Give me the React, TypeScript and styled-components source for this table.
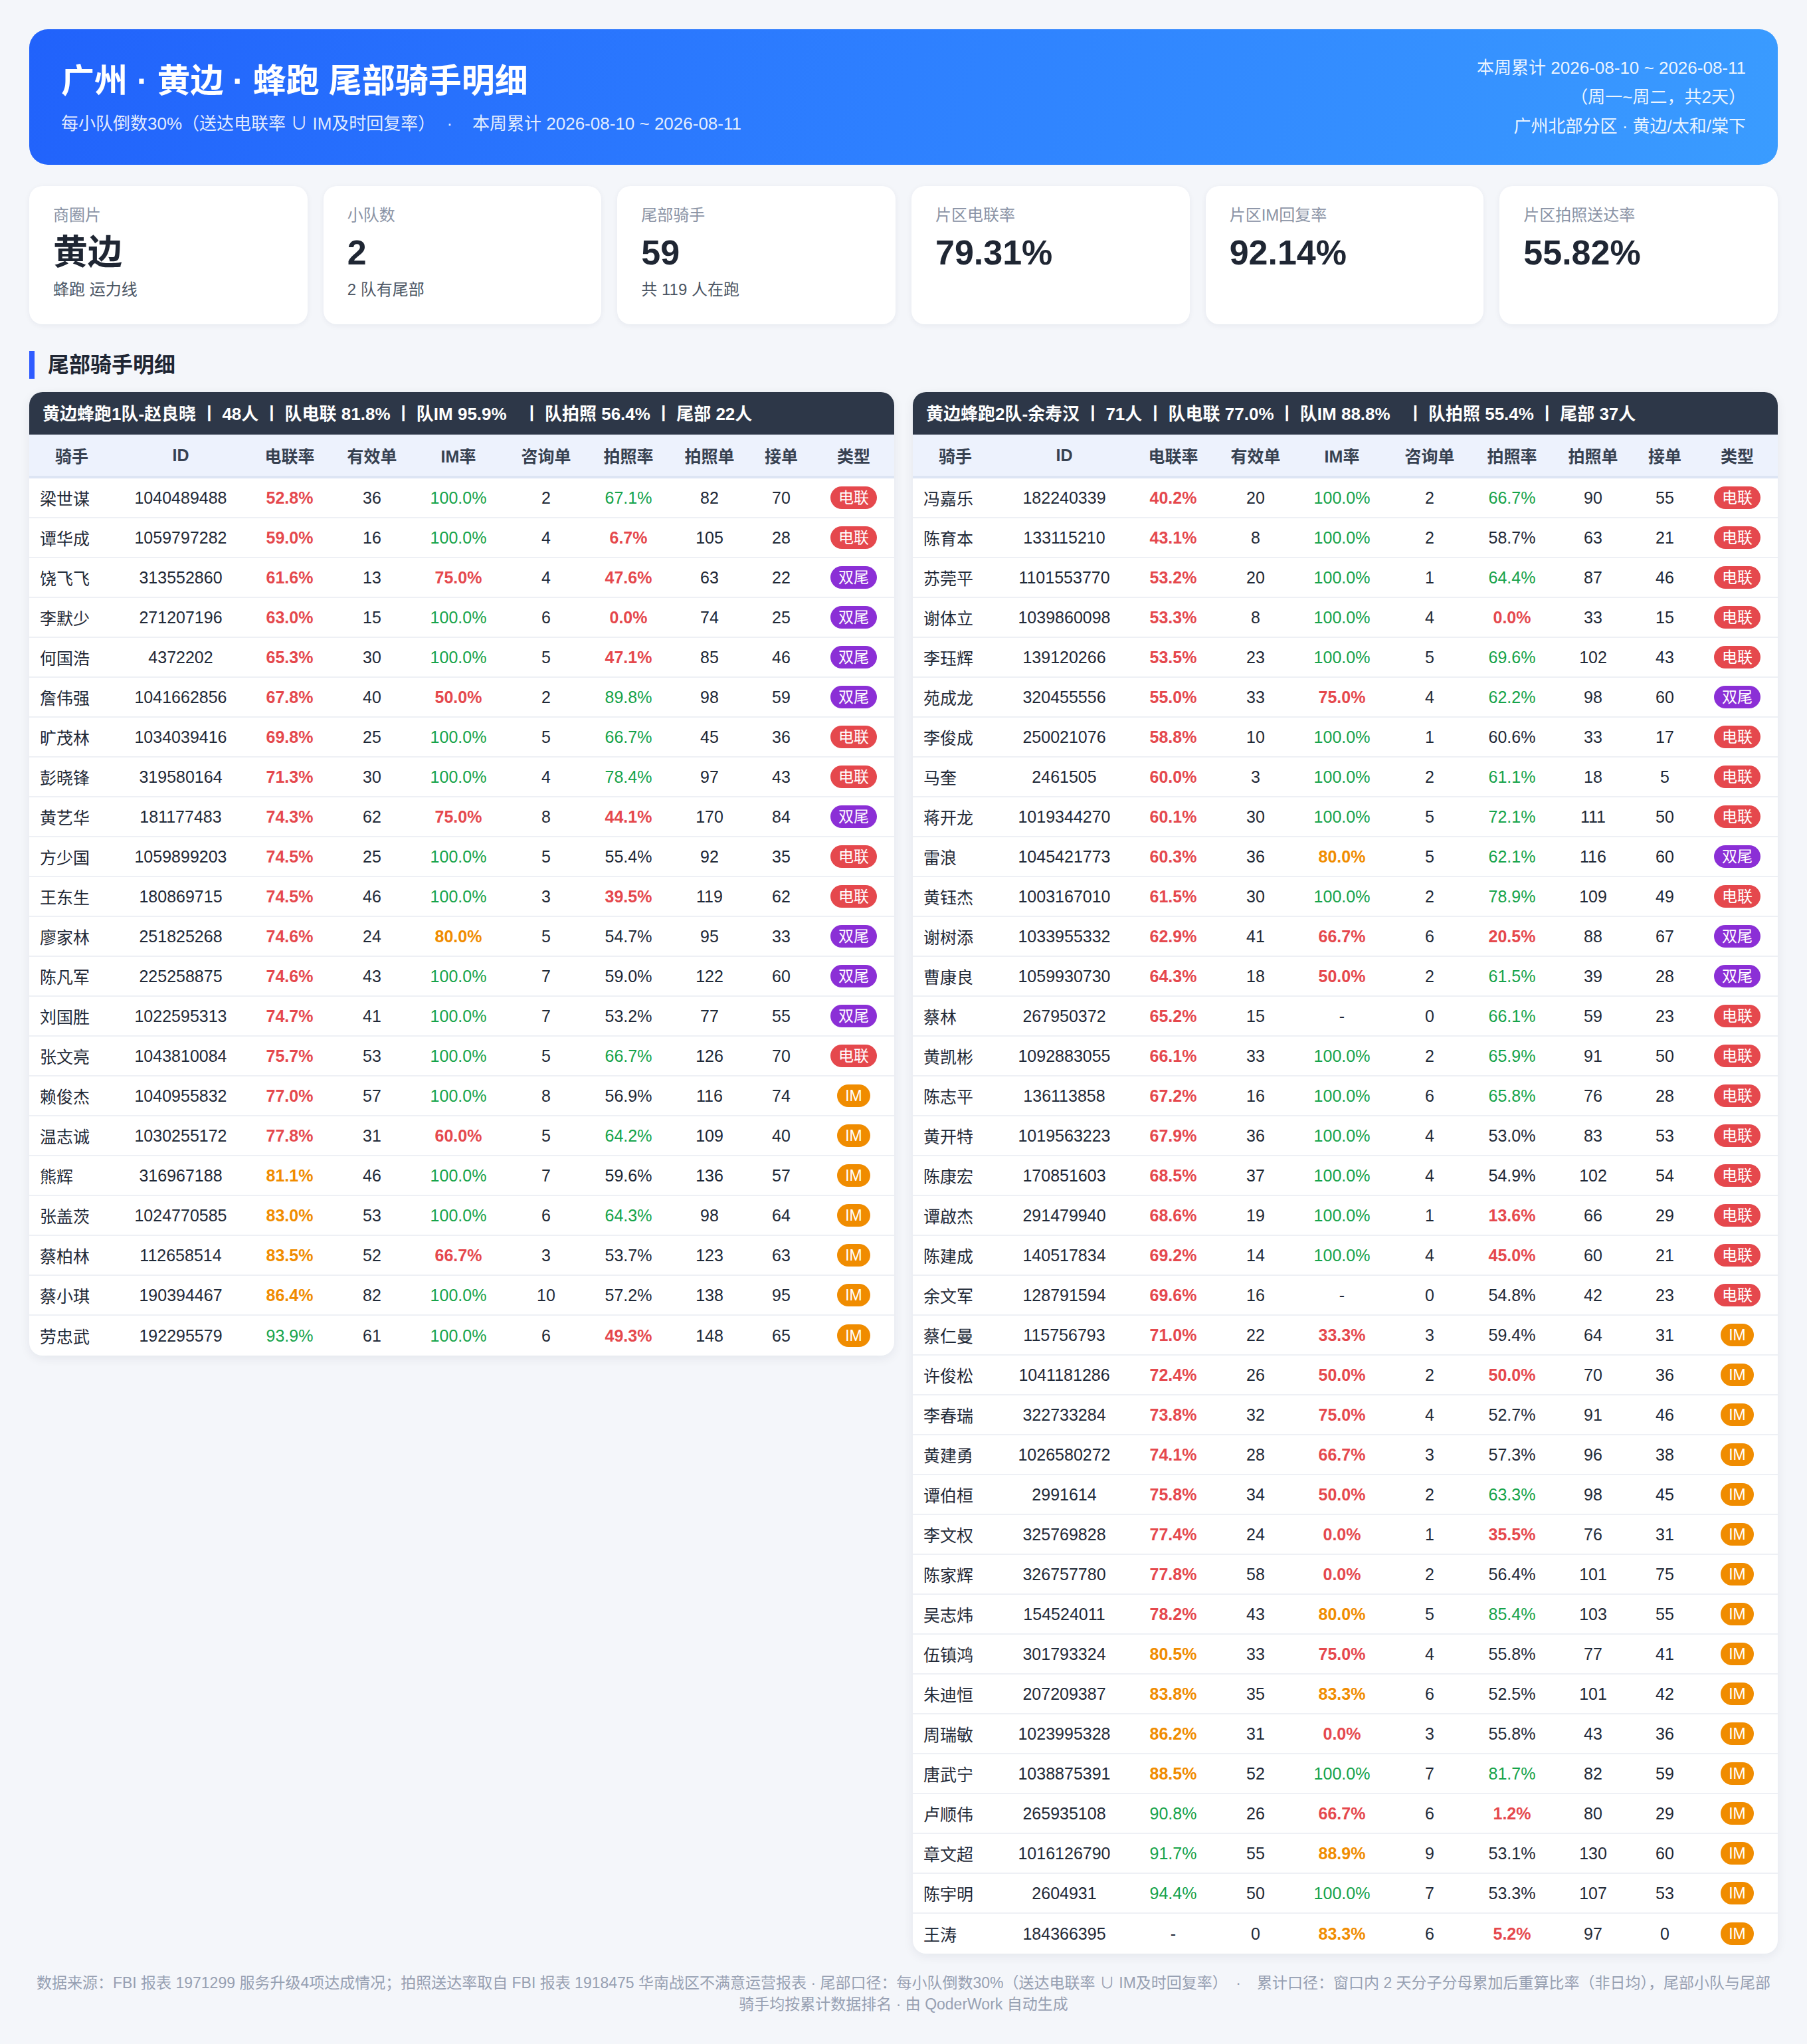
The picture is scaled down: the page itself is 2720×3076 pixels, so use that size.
import React from "react";
import styled, { createGlobalStyle } from "styled-components";

type Kind = "el" | "dual" | "im";
type Row = [string, string, number | null, number, number | null, number, number, number, number, Kind];

const GlobalStyle = createGlobalStyle`
  html, body {
    margin: 0;
    padding: 0;
    background: #f4f6fa;
  }
  body {
    font-family: "Liberation Sans", "Noto Sans CJK SC", sans-serif;
    color: #1f2937;
  }
  * {
    box-sizing: border-box;
  }
`;

const COLORS = {
  red: "#e5484d",
  orange: "#f08c00",
  green: "#16a34a",
  text: "#1f2937",
};

const Page = styled.div`
  zoom: 2;
  width: 1360px;
  padding: 22px 22px 20px;
`;

const Hero = styled.header`
  display: flex;
  justify-content: space-between;
  align-items: center;
  height: 102px;
  padding: 0 24px;
  border-radius: 14px;
  background: linear-gradient(110deg, #2162fb 0%, #2e80ff 50%, #3a9cff 100%);
  color: #ffffff;
`;

const HeroLeft = styled.div`
  display: flex;
  flex-direction: column;
  gap: 6px;
`;

const HeroTitle = styled.h1`
  margin: 0;
  font-size: 25px;
  line-height: 34px;
  font-weight: 700;
`;

const HeroSub = styled.div`
  font-size: 13px;
  line-height: 18px;
  color: rgba(255, 255, 255, 0.88);
`;

const Dot = styled.span<{ $gap: number }>`
  margin: 0 ${(p) => p.$gap}px;
`;

const HeroRight = styled.div`
  text-align: right;
  font-size: 13px;
  line-height: 22px;
  color: rgba(255, 255, 255, 0.92);
`;

const KpiGrid = styled.section`
  display: grid;
  grid-template-columns: repeat(6, 1fr);
  gap: 12px;
  margin-top: 16px;
`;

const KpiCard = styled.div`
  height: 104px;
  padding: 14px 18px;
  background: #ffffff;
  border-radius: 10px;
  box-shadow: 0 1px 4px rgba(20, 30, 60, 0.06);
`;

const KpiLabel = styled.div`
  font-size: 12px;
  line-height: 16px;
  color: #8a93a5;
`;

const KpiValue = styled.div`
  margin-top: 4px;
  font-size: 26px;
  line-height: 32px;
  font-weight: 700;
  color: #1f2633;
`;

const KpiSub = styled.div`
  margin-top: 4px;
  font-size: 12px;
  line-height: 16px;
  color: #4b5563;
`;

const SectionTitle = styled.h2`
  margin: 20px 0 10px;
  padding-left: 10px;
  border-left: 4px solid #2f5bff;
  font-size: 16px;
  line-height: 21px;
  font-weight: 700;
  color: #1f2633;
`;

const Tables = styled.div`
  display: grid;
  grid-template-columns: 1fr 1fr;
  gap: 14px;
  align-items: start;
`;

const TableCard = styled.div`
  background: #ffffff;
  border-radius: 10px;
  overflow: hidden;
  box-shadow: 0 2px 8px rgba(20, 30, 60, 0.07);
`;

const TeamBar = styled.div`
  display: flex;
  align-items: center;
  height: 32px;
  padding: 0 10px 2px;
  background: #2d3748;
  color: #ffffff;
  font-size: 13px;
  font-weight: 700;
  white-space: pre;
`;

const Sep = styled.span<{ $wide?: boolean }>`
  margin: 0 8px 0 ${(p) => (p.$wide ? 17 : 8)}px;
`;

const Table = styled.table`
  width: 100%;
  table-layout: fixed;
  border-collapse: separate;
  border-spacing: 0;
`;

const Th = styled.th`
  height: 33px;
  padding: 0;
  background: #edf2fd;
  border-bottom: 2px solid #dde5f4;
  font-size: 12.5px;
  font-weight: 700;
  color: #374151;
  text-align: center;
`;

const Td = styled.td<{ $left?: boolean; $tone?: keyof typeof COLORS; $bold?: boolean }>`
  height: 30px;
  padding: ${(p) => (p.$left ? "0 0 0 8px" : "0")};
  border-bottom: 1px solid #eef0f5;
  font-size: 12.5px;
  text-align: ${(p) => (p.$left ? "left" : "center")};
  color: ${(p) => COLORS[p.$tone ?? "text"]};
  font-weight: ${(p) => (p.$bold ? 700 : 400)};
  white-space: nowrap;

  tr:last-child > & {
    border-bottom: none;
  }
`;

const Badge = styled.span<{ $kind: Kind }>`
  display: inline-block;
  height: 17px;
  padding: 0 6px;
  border-radius: 9px;
  font-size: 11.5px;
  line-height: 17px;
  color: #ffffff;
  background: ${(p) => (p.$kind === "el" ? COLORS.red : p.$kind === "dual" ? "#8b2fd6" : COLORS.orange)};
`;

const Footer = styled.footer`
  margin-top: 14px;
  font-size: 11.5px;
  line-height: 16px;
  color: #97a0b2;
  text-align: center;
`;

const COLS = [64, 100, 64, 60, 70, 62, 62, 60, 48, 61];
const HEADS = ["骑手", "ID", "电联率", "有效单", "IM率", "咨询单", "拍照率", "拍照单", "接单", "类型"];
const KIND_LABEL: Record<Kind, string> = { el: "电联", dual: "双尾", im: "IM" };

const team1: Row[] = [
  ["梁世谋", "1040489488", 52.8, 36, 100, 2, 67.1, 82, 70, "el"],
  ["谭华成", "1059797282", 59.0, 16, 100, 4, 6.7, 105, 28, "el"],
  ["饶飞飞", "313552860", 61.6, 13, 75, 4, 47.6, 63, 22, "dual"],
  ["李默少", "271207196", 63.0, 15, 100, 6, 0, 74, 25, "dual"],
  ["何国浩", "4372202", 65.3, 30, 100, 5, 47.1, 85, 46, "dual"],
  ["詹伟强", "1041662856", 67.8, 40, 50, 2, 89.8, 98, 59, "dual"],
  ["旷茂林", "1034039416", 69.8, 25, 100, 5, 66.7, 45, 36, "el"],
  ["彭晓锋", "319580164", 71.3, 30, 100, 4, 78.4, 97, 43, "el"],
  ["黄艺华", "181177483", 74.3, 62, 75, 8, 44.1, 170, 84, "dual"],
  ["方少国", "1059899203", 74.5, 25, 100, 5, 55.4, 92, 35, "el"],
  ["王东生", "180869715", 74.5, 46, 100, 3, 39.5, 119, 62, "el"],
  ["廖家林", "251825268", 74.6, 24, 80, 5, 54.7, 95, 33, "dual"],
  ["陈凡军", "225258875", 74.6, 43, 100, 7, 59.0, 122, 60, "dual"],
  ["刘国胜", "1022595313", 74.7, 41, 100, 7, 53.2, 77, 55, "dual"],
  ["张文亮", "1043810084", 75.7, 53, 100, 5, 66.7, 126, 70, "el"],
  ["赖俊杰", "1040955832", 77.0, 57, 100, 8, 56.9, 116, 74, "im"],
  ["温志诚", "1030255172", 77.8, 31, 60, 5, 64.2, 109, 40, "im"],
  ["熊辉", "316967188", 81.1, 46, 100, 7, 59.6, 136, 57, "im"],
  ["张盖茨", "1024770585", 83.0, 53, 100, 6, 64.3, 98, 64, "im"],
  ["蔡柏林", "112658514", 83.5, 52, 66.7, 3, 53.7, 123, 63, "im"],
  ["蔡小琪", "190394467", 86.4, 82, 100, 10, 57.2, 138, 95, "im"],
  ["劳忠武", "192295579", 93.9, 61, 100, 6, 49.3, 148, 65, "im"],
];

const team2: Row[] = [
  ["冯嘉乐", "182240339", 40.2, 20, 100, 2, 66.7, 90, 55, "el"],
  ["陈育本", "133115210", 43.1, 8, 100, 2, 58.7, 63, 21, "el"],
  ["苏莞平", "1101553770", 53.2, 20, 100, 1, 64.4, 87, 46, "el"],
  ["谢体立", "1039860098", 53.3, 8, 100, 4, 0, 33, 15, "el"],
  ["李珏辉", "139120266", 53.5, 23, 100, 5, 69.6, 102, 43, "el"],
  ["苑成龙", "320455556", 55.0, 33, 75, 4, 62.2, 98, 60, "dual"],
  ["李俊成", "250021076", 58.8, 10, 100, 1, 60.6, 33, 17, "el"],
  ["马奎", "2461505", 60.0, 3, 100, 2, 61.1, 18, 5, "el"],
  ["蒋开龙", "1019344270", 60.1, 30, 100, 5, 72.1, 111, 50, "el"],
  ["雷浪", "1045421773", 60.3, 36, 80, 5, 62.1, 116, 60, "dual"],
  ["黄钰杰", "1003167010", 61.5, 30, 100, 2, 78.9, 109, 49, "el"],
  ["谢树添", "1033955332", 62.9, 41, 66.7, 6, 20.5, 88, 67, "dual"],
  ["曹康良", "1059930730", 64.3, 18, 50, 2, 61.5, 39, 28, "dual"],
  ["蔡林", "267950372", 65.2, 15, null, 0, 66.1, 59, 23, "el"],
  ["黄凯彬", "1092883055", 66.1, 33, 100, 2, 65.9, 91, 50, "el"],
  ["陈志平", "136113858", 67.2, 16, 100, 6, 65.8, 76, 28, "el"],
  ["黄开特", "1019563223", 67.9, 36, 100, 4, 53.0, 83, 53, "el"],
  ["陈康宏", "170851603", 68.5, 37, 100, 4, 54.9, 102, 54, "el"],
  ["谭啟杰", "291479940", 68.6, 19, 100, 1, 13.6, 66, 29, "el"],
  ["陈建成", "140517834", 69.2, 14, 100, 4, 45.0, 60, 21, "el"],
  ["余文军", "128791594", 69.6, 16, null, 0, 54.8, 42, 23, "el"],
  ["蔡仁曼", "115756793", 71.0, 22, 33.3, 3, 59.4, 64, 31, "im"],
  ["许俊松", "1041181286", 72.4, 26, 50, 2, 50.0, 70, 36, "im"],
  ["李春瑞", "322733284", 73.8, 32, 75, 4, 52.7, 91, 46, "im"],
  ["黄建勇", "1026580272", 74.1, 28, 66.7, 3, 57.3, 96, 38, "im"],
  ["谭伯桓", "2991614", 75.8, 34, 50, 2, 63.3, 98, 45, "im"],
  ["李文权", "325769828", 77.4, 24, 0, 1, 35.5, 76, 31, "im"],
  ["陈家辉", "326757780", 77.8, 58, 0, 2, 56.4, 101, 75, "im"],
  ["吴志炜", "154524011", 78.2, 43, 80, 5, 85.4, 103, 55, "im"],
  ["伍镇鸿", "301793324", 80.5, 33, 75, 4, 55.8, 77, 41, "im"],
  ["朱迪恒", "207209387", 83.8, 35, 83.3, 6, 52.5, 101, 42, "im"],
  ["周瑞敏", "1023995328", 86.2, 31, 0, 3, 55.8, 43, 36, "im"],
  ["唐武宁", "1038875391", 88.5, 52, 100, 7, 81.7, 82, 59, "im"],
  ["卢顺伟", "265935108", 90.8, 26, 66.7, 6, 1.2, 80, 29, "im"],
  ["章文超", "1016126790", 91.7, 55, 88.9, 9, 53.1, 130, 60, "im"],
  ["陈宇明", "2604931", 94.4, 50, 100, 7, 53.3, 107, 53, "im"],
  ["王涛", "184366395", null, 0, 83.3, 6, 5.2, 97, 0, "im"],
];

const kpis = [
  { label: "商圈片", value: "黄边", sub: "蜂跑 运力线" },
  { label: "小队数", value: "2", sub: "2 队有尾部" },
  { label: "尾部骑手", value: "59", sub: "共 119 人在跑" },
  { label: "片区电联率", value: "79.31%" },
  { label: "片区IM回复率", value: "92.14%" },
  { label: "片区拍照送达率", value: "55.82%" },
];

const pct = (v: number | null) => (v === null ? "-" : `${v.toFixed(1)}%`);

// 电联率 / IM率: <80 红, <90 橙, 其余绿
function rateTone(v: number | null): { tone?: keyof typeof COLORS; bold?: boolean } {
  if (v === null) return {};
  if (v < 80) return { tone: "red", bold: true };
  if (v < 90) return { tone: "orange", bold: true };
  return { tone: "green" };
}

// 拍照率: <=50 红, >=61 绿
function photoTone(v: number): { tone?: keyof typeof COLORS; bold?: boolean } {
  if (v <= 50) return { tone: "red", bold: true };
  if (v >= 61) return { tone: "green" };
  return {};
}

function TeamTable({ title, rows }: { title: string[]; rows: Row[] }) {
  return (
    <TableCard>
      <TeamBar>
        {title.map((part, i) => (
          <React.Fragment key={part}>
            {i > 0 && <Sep $wide={i === 4}>|</Sep>}
            <span>{part}</span>
          </React.Fragment>
        ))}
      </TeamBar>
      <Table>
        <colgroup>
          {COLS.map((w, i) => (
            <col key={i} style={{ width: w }} />
          ))}
        </colgroup>
        <thead>
          <tr>
            {HEADS.map((h) => (
              <Th key={h}>{h}</Th>
            ))}
          </tr>
        </thead>
        <tbody>
          {rows.map((r) => {
            const el = rateTone(r[2]);
            const im = rateTone(r[4]);
            const ph = photoTone(r[6]);
            return (
              <tr key={r[1]}>
                <Td $left>{r[0]}</Td>
                <Td>{r[1]}</Td>
                <Td $tone={el.tone} $bold={el.bold}>{pct(r[2])}</Td>
                <Td>{r[3]}</Td>
                <Td $tone={im.tone} $bold={im.bold}>{pct(r[4])}</Td>
                <Td>{r[5]}</Td>
                <Td $tone={ph.tone} $bold={ph.bold}>{pct(r[6])}</Td>
                <Td>{r[7]}</Td>
                <Td>{r[8]}</Td>
                <Td>
                  <Badge $kind={r[9]}>{KIND_LABEL[r[9]]}</Badge>
                </Td>
              </tr>
            );
          })}
        </tbody>
      </Table>
    </TableCard>
  );
}

export default function App() {
  return (
    <>
      <GlobalStyle />
      <Page>
        <Hero>
          <HeroLeft>
            <HeroTitle>广州 · 黄边 · 蜂跑 尾部骑手明细</HeroTitle>
            <HeroSub>
              每小队倒数30%（送达电联率 ∪ IM及时回复率）
              <Dot $gap={15}>·</Dot>
              本周累计 2026-08-10 ~ 2026-08-11
            </HeroSub>
          </HeroLeft>
          <HeroRight>
            <div>本周累计 2026-08-10 ~ 2026-08-11</div>
            <div>（周一~周二，共2天）</div>
            <div>广州北部分区 · 黄边/太和/棠下</div>
          </HeroRight>
        </Hero>

        <KpiGrid>
          {kpis.map((k) => (
            <KpiCard key={k.label}>
              <KpiLabel>{k.label}</KpiLabel>
              <KpiValue>{k.value}</KpiValue>
              {k.sub && <KpiSub>{k.sub}</KpiSub>}
            </KpiCard>
          ))}
        </KpiGrid>

        <SectionTitle>尾部骑手明细</SectionTitle>

        <Tables>
          <TeamTable
            title={["黄边蜂跑1队-赵良晓", "48人", "队电联 81.8%", "队IM 95.9%", "队拍照 56.4%", "尾部 22人"]}
            rows={team1}
          />
          <TeamTable
            title={["黄边蜂跑2队-余寿汉", "71人", "队电联 77.0%", "队IM 88.8%", "队拍照 55.4%", "尾部 37人"]}
            rows={team2}
          />
        </Tables>

        <Footer>
          数据来源：FBI 报表 1971299 服务升级4项达成情况；拍照送达率取自 FBI 报表 1918475 华南战区不满意运营报表 · 尾部口径：每小队倒数30%（送达电联率 ∪ IM及时回复率）
          <Dot $gap={12}>·</Dot>
          累计口径：窗口内 2 天分子分母累加后重算比率（非日均），尾部小队与尾部骑手均按累计数据排名 · 由 QoderWork 自动生成
        </Footer>
      </Page>
    </>
  );
}
